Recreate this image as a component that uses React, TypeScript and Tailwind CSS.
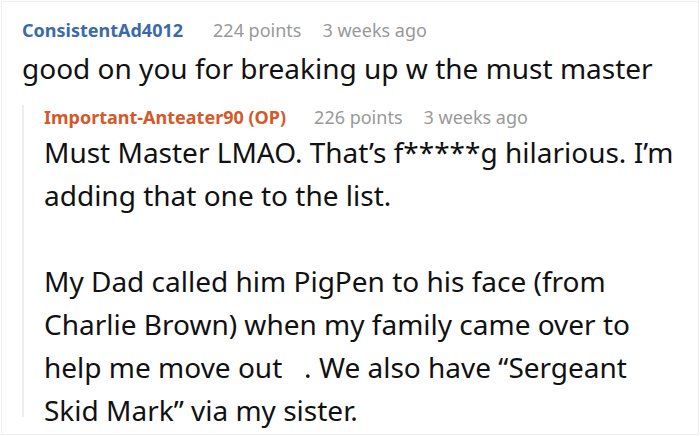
export default function App() {
  return (
    <main
      className="w-[700px] h-[436px] bg-white overflow-hidden"
      style={{ fontFamily: '"Noto Sans", "Open Sans", sans-serif' }}
    >
      <div className="w-[698px] h-[434px] mt-px ml-px border border-[#eeeeee] pl-[20px] pt-[14px]">
        <div className="flex items-baseline text-[18px] leading-[28px]">
          <span className="font-bold text-[#3a6aac]">ConsistentAd4012</span>
          <span className="ml-[30px] text-[#999999]">224 points</span>
          <span className="ml-[21px] text-[#999999]">3 weeks ago</span>
        </div>
        <p className="text-[28px] leading-[48px] text-[#111111] whitespace-nowrap">
          good on you for breaking up w the must master
        </p>

        <div className="mt-[11px] flex">
          <div className="w-[2px] h-[312px] mt-[2px] bg-[#eeeeee] shrink-0" />
          <div className="pl-[20px]">
            <div className="flex items-baseline text-[18px] leading-[28px]">
              <span className="font-bold text-[#d5582a]">Important-Anteater90 (OP)</span>
              <span className="ml-[28px] text-[#999999]">226 points</span>
              <span className="ml-[21px] text-[#999999]">3 weeks ago</span>
            </div>
            <div className="text-[28px] leading-[43px] text-[#111111] whitespace-nowrap">
              <p>
                Must Master LMAO. That’s f*****g hilarious. I’m
                <br />
                adding that one to the list.
              </p>
              <p className="mt-[43px]">
                My Dad called him PigPen to his face (from
                <br />
                Charlie Brown) when my family came over to
                <br />
                help me move out&nbsp;&nbsp;&nbsp;. We also have “Sergeant
                <br />
                Skid Mark” via my sister.
              </p>
            </div>
          </div>
        </div>
      </div>
    </main>
  )
}
